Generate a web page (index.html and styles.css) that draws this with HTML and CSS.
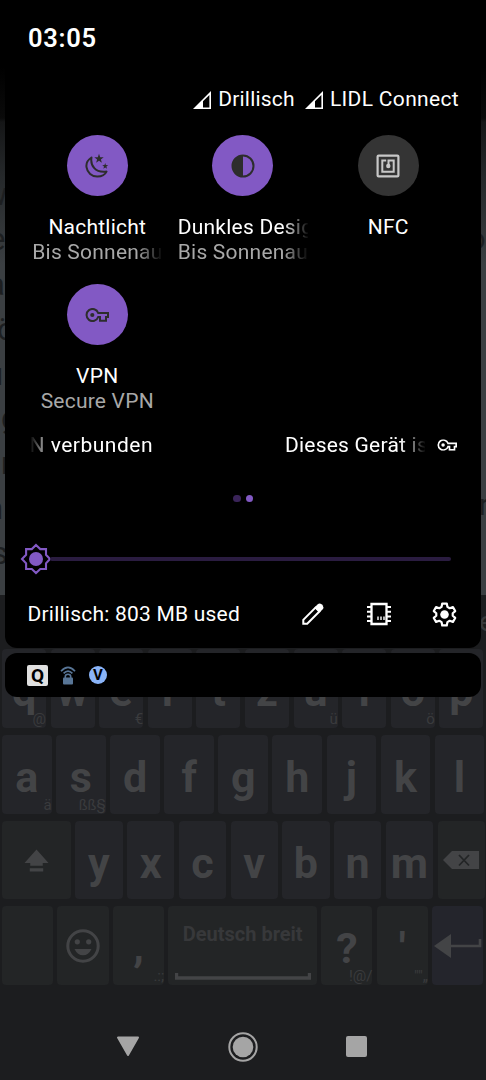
FILE: index.html
```html
<!DOCTYPE html>
<html lang="de">
<head>
<meta charset="utf-8">
<title>Schnelleinstellungen</title>
<link rel="stylesheet" href="styles.css">
</head>
<body>
<svg width="0" height="0" class="defs">
  <symbol id="signal" viewBox="0 0 18 18"><path d="M0 18L18 0V18Z" fill="#fff"/><path d="M10 10.300L16.400 4V16.400H10Z" fill="#000"/></symbol>
  <symbol id="key" viewBox="0 0 24 14"><path d="M22 5H13.2A6 6 0 1 0 13.2 9H15V12.8H21V9H23V5Z" fill="none" stroke="currentColor" stroke-width="2"/><circle cx="7.3" cy="7" r="2.1" fill="currentColor"/></symbol>
</svg>
<div class="screen">
  <main class="article">
    <p class="line l1">w</p><p class="line l2">e</p><p class="line l3">a</p><p class="line l4">ö</p><p class="line l5">u</p><p class="line l6">g</p><p class="line l7">r</p><p class="line l8">n</p><p class="line l9">s</p>
    <span class="edge edge-o">o</span><span class="edge edge-r">r</span>
  </main>
  <div class="suggest"><span>e</span></div>
  <section class="keyboard">
    <div class="row ten">
      <div class="key">q<small>@</small></div><div class="key">w</div><div class="key">e<small>€</small></div><div class="key">r</div><div class="key">t</div><div class="key">z</div><div class="key">u<small>ü</small></div><div class="key">i</div><div class="key">o<small>ö</small></div><div class="key">p</div>
    </div>
    <div class="row nine">
      <div class="key">a<small>ä</small></div><div class="key">s<small>ßß§</small></div><div class="key">d</div><div class="key">f</div><div class="key">g</div><div class="key">h</div><div class="key">j</div><div class="key">k</div><div class="key">l</div>
    </div>
    <div class="row third">
      <div class="key fn"><svg class="shift" viewBox="0 0 26 25"><path d="M13 1L25.500 15H19.500V18H6.500V15H.5Z M6 20.500H20V24H6Z" fill="currentColor"/></svg></div>
      <div class="key">y</div><div class="key">x</div><div class="key">c</div><div class="key">v</div><div class="key">b</div><div class="key">n</div><div class="key">m</div>
      <div class="key fn"><svg class="back" viewBox="0 0 36 18"><path d="M0 9L9 0H36V18H9Z" fill="currentColor"/><path d="M16 4L26 14.500M26 4L16 14.500" stroke="#232526" stroke-width="1.800"/></svg></div>
    </div>
    <div class="row fourth">
      <div class="key fn"></div>
      <div class="key fn"><svg class="smile" viewBox="0 0 34 34"><circle cx="17" cy="17" r="15.200" fill="none" stroke="currentColor" stroke-width="3"/><circle cx="11.300" cy="12.800" r="2.600" fill="currentColor"/><circle cx="22.700" cy="12.800" r="2.600" fill="currentColor"/><path d="M8.500 20H25.500Q22.500 26.300 17 26.300T8.500 20Z" fill="currentColor"/></svg></div>
      <div class="key fn comma">,<small>.:;</small></div>
      <div class="key fn space"><span>Deutsch breit</span><svg viewBox="0 0 136 7"><path d="M1.500 0V5H134.500V0" fill="none" stroke="currentColor" stroke-width="3.400"/></svg></div>
      <div class="key fn mark">?<small>!@/</small></div>
      <div class="key fn mark">'<small>""„</small></div>
      <div class="key enter"><svg viewBox="0 0 48 26"><path d="M0 13L17 1V25Z" fill="currentColor"/><path d="M16 13H46V6" fill="none" stroke="currentColor" stroke-width="2.600"/></svg></div>
    </div>
  </section>
  <nav class="nav">
    <svg class="nav-back" viewBox="0 0 24 21"><path d="M2 1.500H22L12 19Z" fill="#a5a5a5" stroke="#a5a5a5" stroke-width="2" stroke-linejoin="round"/></svg>
    <svg class="nav-home" viewBox="0 0 30 30"><circle cx="15" cy="15" r="13.700" fill="none" stroke="#a5a5a5" stroke-width="2"/><circle cx="15" cy="15" r="10.300" fill="#a5a5a5"/></svg>
    <i class="nav-recent"></i>
  </nav>

  <div class="shade">
    <header class="clock"><span>03:05</span></header>
    <section class="panel">
      <div class="carriers">
        <svg><use href="#signal"/></svg><span class="c1">Drillisch</span>
        <svg><use href="#signal"/></svg><span class="c2">LIDL Connect</span>
      </div>
      <div class="tiles">
        <div class="tile">
          <div class="disc on"><svg width="24" height="26" viewBox="0 0 24 26"><path d="M6.500 4.500C2.700 6.900 1 10.500 1.500 14.200C2.200 19.700 6.800 23.800 12.500 23.600C16.500 23.500 20 21.700 21.500 18.600C16 19.300 12 18.200 9.300 15.200C6.700 12.300 5.800 8.500 6.500 4.500Z" fill="none" stroke="currentColor" stroke-width="2" stroke-linejoin="round"/><path d="M14 .8L15.200 4.200L18.700 4.300L15.900 6.400L16.900 9.800L14 7.800L11.100 9.800L12.100 6.400L9.300 4.300L12.800 4.200Z" fill="currentColor"/><path d="M20.200 10L20.900 12.100L23.200 12.200L21.400 13.500L22 15.700L20.200 14.400L18.400 15.700L19 13.500L17.200 12.200L19.500 12.100Z" fill="currentColor"/></svg></div>
          <b class="t1">Nachtlicht</b><span class="long fade">Bis Sonnenau</span>
        </div>
        <div class="tile">
          <div class="disc on"><svg width="24" height="24" viewBox="0 0 24 24"><circle cx="12" cy="12" r="10.500" fill="none" stroke="currentColor" stroke-width="2"/><path d="M12 1.500A10.500 10.500 0 0 0 12 22.500Z" fill="currentColor"/></svg></div>
          <b class="long fade t2">Dunkles Desig</b><span class="long fade">Bis Sonnenau</span>
        </div>
        <div class="tile">
          <div class="disc"><svg width="24" height="24" viewBox="0 0 24 24"><rect x="1.600" y="1.600" width="20.800" height="20.800" rx="1" fill="none" stroke="currentColor" stroke-width="2.200"/><path d="M10.200 6.500H6.300V17.700H17.700V6.500H12.500V11" fill="none" stroke="currentColor" stroke-width="2"/><circle cx="12.300" cy="12" r="2.200" fill="currentColor"/></svg></div>
          <b>NFC</b>
        </div>
        <div class="tile">
          <div class="disc on"><svg width="24" height="14"><use href="#key"/></svg></div>
          <b>VPN</b><span class="t3">Secure VPN</span>
        </div>
      </div>
      <div class="security">
        <span class="sec-a">N verbunden</span><span class="sec-b">Dieses Gerät is</span>
        <svg width="20" height="12" viewBox="0 0 24 14"><use href="#key"/></svg>
      </div>
      <div class="dots"><i></i><i class="active"></i></div>
      <div class="slider">
        <svg viewBox="0 0 32 32"><path d="M16 2L20.300 6.100H26V11.800L30 16L26 20.300V26H20.300L16 30L11.800 26H6.100V20.300L2 16L6.100 11.800V6.100H11.800Z" fill="#000" stroke="#8259c4" stroke-width="2.100"/><circle cx="16" cy="16" r="7" fill="#8259c4"/></svg>
        <i></i>
      </div>
      <footer class="foot">
        <span>Drillisch: 803 MB used</span>
        <svg class="pencil" viewBox="0 0 24 24"><path d="M2.300 21.700V17.800L14.500 5.600L18.400 9.500L6.200 21.700Z" fill="none" stroke="#fff" stroke-width="2"/><path d="M13.500 5.500L16.500 2.500Q18.500 .8 20.500 2.200L21.800 3.500Q23.200 5.500 21.500 7.500L18.500 10.500Z" fill="#fff"/></svg>
        <svg class="chip" viewBox="0 0 26 24"><path d="M5.500 2H20.500V22H5.500Z" fill="none" stroke="#fff" stroke-width="2.300"/><path d="M1 5H5M1 9.700H5M1 14.400H5M1 19H5M21 5H25M21 9.700H25M21 14.400H25M21 19H25" stroke="#fff" stroke-width="2"/><path d="M12 14.500V18M15 14.500V18M18 14.500V18" stroke="#fff" stroke-width="1.400"/></svg>
        <svg class="gear" viewBox="0 0 24 24"><path d="M9.800 1.500H14.200L14.800 4.700L17 6L20.100 4.900L22.300 8.700L19.900 10.800V13.200L22.300 15.300L20.100 19.100L17 18L14.800 19.300L14.200 22.500H9.800L9.200 19.300L7 18L3.900 19.100L1.700 15.300L4.100 13.200V10.800L1.700 8.700L3.900 4.900L7 6L9.200 4.700Z" fill="none" stroke="#fff" stroke-width="2.100" stroke-linejoin="round"/><circle cx="12" cy="12" r="4.100" fill="#fff"/></svg>
      </footer>
    </section>
    <section class="notifs">
      <i class="q">Q</i>
      <svg class="wifi" viewBox="0 0 16 19"><path d="M1 5.300Q8-2.500 15 5.300M3.600 7.400Q8 2.800 12.400 7.400" fill="none" stroke="#587596" stroke-width="1.700"/><path d="M5.300 12V10.500Q5.300 8.200 8 8.200T10.700 10.500V12" fill="none" stroke="#587596" stroke-width="1.600"/><rect x="3" y="11.500" width="10" height="7" rx="1" fill="#587596"/></svg>
      <i class="v">V</i>
    </section>
  </div>
</div>
</body>
</html>
```
FILE: styles.css
```css
* { box-sizing: border-box; }
body { margin: 0; background: #1c1d1f; font-family: Roboto, sans-serif; color: #fff; }
.defs { position: absolute; }
.screen { position: relative; width: 486px; height: 1080px; overflow: hidden; display: flex; flex-direction: column; }
svg { display: block; flex: none; }

/* dimmed page */
.article { position: relative; height: 595px; padding-top: 173px; background: linear-gradient(#000 66px, #0a0a0a 118px, #151617 122px, #25282a 175px, #3b3f42 265px); overflow: hidden; }
.line { margin: 0; height: 44.900px; line-height: 44.900px; font-size: 31px; color: #1d1f21; white-space: nowrap; }
.l1 { text-indent: -16px; } .l2 { text-indent: -11px; } .l3 { text-indent: -12px; } .l4 { text-indent: -3px; }
.l5 { text-indent: -14px; } .l6 { text-indent: 1px; } .l7 { text-indent: 1px; } .l8 { text-indent: -14px; } .l9 { text-indent: -8px; }
.edge { position: absolute; font-size: 29px; line-height: 34px; color: #1d1f21; }
.edge-o { left: 469px; top: 222px; }
.edge-r { left: 479px; top: 488px; }
.suggest { height: 54px; padding: 10px 0 0 479px; font-size: 28px; line-height: 33px; color: #38393b; overflow: hidden; }

/* keyboard */
.keyboard { display: flex; flex-direction: column; gap: 7px; padding: 0 2px; height: 336px; }
.row { display: grid; height: 79px; column-gap: 4.500px; }
.ten { grid-template-columns: repeat(10, 44.100px); }
.nine { grid-template-columns: repeat(9, 49.600px); }
.third { grid-template-columns: 68.800px repeat(8, 47.250px); }
.fourth { grid-template-columns: 51.200px 51.200px 51.200px 148.500px 51.200px 51.200px 51.200px; column-gap: 4.300px; }
.key { position: relative; display: flex; align-items: center; justify-content: center; padding-top: 6px; background: #242529; border-radius: 4px; font-size: 43px; font-weight: 700; line-height: 50px; color: #434446; }
.key small { position: absolute; right: 0; bottom: 0; font-size: 15px; font-weight: 400; line-height: 18px; color: #3a3b3d; }
.fn { background: #232526; }
.enter { background: #24252c; }
.key.comma { padding-top: 0; }
.key.mark { padding-top: 4px; }
.shift { width: 25px; height: 25px; margin-top: -5px; }
.back { width: 36px; height: 18px; margin-top: -6px; }
.smile { width: 34px; height: 34px; margin-top: -6px; }
.space { flex-direction: column; justify-content: space-between; padding: 16px 0 5px; font-size: 20px; line-height: 24px; }
.space span { color: #37383a; }
.space svg { width: 136px; height: 7px; }
.enter svg { width: 48px; height: 26px; margin-top: -6px; }

.nav { flex: 1; display: flex; align-items: center; padding: 28px 0 0 116px; }
.nav-back { width: 24px; height: 21px; }
.nav-home { width: 30px; height: 30px; margin-left: 88px; }
.nav-recent { width: 21px; height: 21px; margin-left: 88px; background: #a5a5a5; border-radius: 2px; }

/* notification shade lying over the page */
.shade { position: absolute; inset: 0 0 auto 0; }
.clock { height: 66px; padding: 24px 0 0 28px; background: #000; font-size: 25.500px; line-height: 29px; font-weight: 600; letter-spacing: .7px; }
.panel { margin: 0 5px; height: 582px; background: #000; border-radius: 0 0 12px 12px; font-size: 21px; line-height: 25px; letter-spacing: .22px; }
.carriers { display: flex; align-items: center; height: 69px; padding: 0 22px 2px 0; justify-content: flex-end; }
.carriers svg { width: 18px; height: 18px; margin-right: 7px; }
.carriers .c1 { margin-right: 10px; }
.carriers .c2 { letter-spacing: .33px; }
.tiles { display: grid; grid-template-columns: repeat(3, 145.500px); grid-auto-rows: 149px; padding-left: 19.500px; }
.tile { display: flex; flex-direction: column; align-items: center; white-space: nowrap; color: #a8a8a8; }
.tile b { margin-top: 19px; font-weight: 400; color: #fff; }
.disc { width: 61px; height: 61px; flex: none; display: flex; align-items: center; justify-content: center; border-radius: 50%; background: #343434; color: #c8c8c8; }
.disc.on { background: #8259c4; color: #2d2d2d; }
.long { width: 130px; overflow: hidden; }
.fade { -webkit-mask-image: linear-gradient(90deg, #000 105px, transparent 131px); mask-image: linear-gradient(90deg, #000 105px, transparent 131px); }
.security { display: flex; align-items: center; height: 24px; padding: 0 24px 0 24.500px; white-space: nowrap; }
.sec-a { letter-spacing: .5px; -webkit-mask-image: linear-gradient(90deg, transparent, #000 22px); mask-image: linear-gradient(90deg, transparent, #000 22px); }
.sec-b { width: 140px; margin: 0 12px 0 auto; overflow: hidden; -webkit-mask-image: linear-gradient(90deg, #000 115px, transparent 141px); mask-image: linear-gradient(90deg, #000 115px, transparent 141px); }
.dots { display: flex; justify-content: center; gap: 5px; padding-top: 37.500px; }
.dots i { width: 7.500px; height: 7.500px; border-radius: 50%; background: #3a2459; }
.dots .active { background: #8259c4; }
.slider { display: flex; align-items: center; height: 32px; margin: 41px 30.500px 0 14.500px; }
.slider svg { width: 32px; height: 32px; }
.slider i { flex: 1; height: 4px; margin-left: -2px; border-radius: 2px; background: #2a1c40; }
.foot { display: flex; align-items: center; height: 34px; margin-top: 22px; padding: 0 23px 0 22.500px; }
.foot span { width: 273px; white-space: nowrap; }
.pencil { width: 24px; height: 24px; }
.chip { width: 26px; height: 24px; margin-left: 41px; }
.gear { width: 25px; height: 25px; margin-left: 40px; }
.notifs { display: flex; align-items: center; height: 44px; margin: 5px 5px 0; padding-left: 22px; border-radius: 12px; background: #000; }
.notifs i { display: flex; align-items: center; justify-content: center; font-style: normal; color: #000; }
.q { width: 21px; height: 21px; border-radius: 2px; background: #e0e0e0; font: 700 19px/21px Roboto, sans-serif; }
.wifi { width: 16px; height: 19px; margin: 0 13px 0 12px; }
.v { width: 18px; height: 18px; border-radius: 50%; background: #8ab4f8; font: 700 15px/18px Roboto, sans-serif; }
```
